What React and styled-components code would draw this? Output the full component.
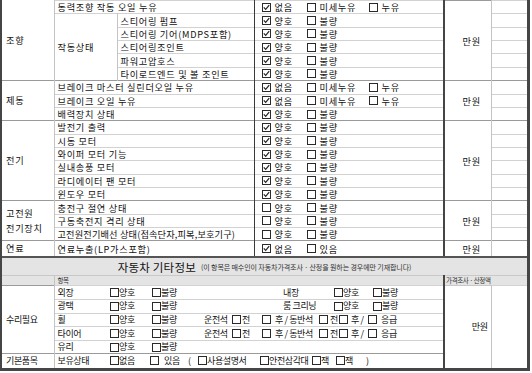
import React from 'react'
import styled, { createGlobalStyle } from 'styled-components'

const Global = createGlobalStyle`
  html, body { margin: 0; padding: 0; background: #fff; }
  body { font-family: "Noto Sans CJK KR", "Noto Sans", sans-serif; color: #111; }
`

const Frame = styled.div`
  width: 525px;
  border-left: 2px solid #454545;
  border-right: 3px solid #454545;
  border-bottom: 3px solid #454545;
`

const Table = styled.table`
  width: 525px;
  table-layout: fixed;
  border-collapse: collapse;
  font-size: 9.2px;
  letter-spacing: 0.7px;
  word-spacing: 0;
  td { padding: 0; line-height: 12px; white-space: nowrap; overflow: hidden; }
`

const Row = styled.tr`
  height: 13.37px;
  td { border-top: 1px solid ${p => (p.group ? '#9a9a9a' : '#d2d2d2')}; }
`

const Cat = styled.td`
  padding-left: 4px !important;
  border-right: 1px solid #c4c4c4;
  border-top: 1px solid ${p => (p.first ? 'transparent' : '#9a9a9a')} !important;
  vertical-align: middle;
  line-height: 15px !important;
`

const Item = styled.td`
  padding-left: 3px !important;
  border-right: ${p => (p.inner ? '1px solid #c4c4c4' : '1px solid #3a3a3a')};
  letter-spacing: ${p => (p.tight ? '0.15px' : 'inherit')};
`

const Result = styled.td`
  padding-left: 7px !important;
  border-right: 2px solid #454545;
`

const Price = styled.td`
  text-align: center;
  vertical-align: middle;
  padding-left: 8px !important;
  border-right: 1px solid #c4c4c4;
  border-top: 1px solid #9a9a9a !important;
`

const Blank = styled.td``

const Options = styled.div`
  display: flex;
  align-items: center;
`

const Opt = styled.span`
  display: inline-flex;
  align-items: center;
  flex: none;
  gap: ${p => p.gap ?? 5}px;
  width: ${p => (p.w ? `${p.w}px` : 'auto')};
  margin-left: ${p => p.ml || 0}px;
`

const Word = styled.span`
  flex: none;
  width: ${p => (p.w ? `${p.w}px` : 'auto')};
`

const Box = ({ on, size = 9 }) => (
  <svg width={size} height={size} viewBox="0 0 9 9" style={{ flex: 'none' }}>
    <rect x="0.5" y="0.5" width="8" height="8" fill="#fff" stroke="#2a2a2a" />
    {on && <path d="M1.8 4.4 L3.7 6.4 L7.2 2.2" fill="none" stroke="#222" strokeWidth="1.2" />}
  </svg>
)

const Check = ({ on, label, w, gap, ml, size }) => (
  <Opt w={w} gap={gap} ml={ml}>
    <Box on={on} size={size} />
    {label}
  </Opt>
)

const Good = ({ on = true }) => (
  <Options>
    <Check on={on} label="양호" w={45} gap={4} />
    <Check label="불량" gap={4} />
  </Options>
)

const Leak = () => (
  <Options>
    <Check on label="없음" w={45} gap={4} />
    <Check label="미세누유" w={62} gap={4} />
    <Check label="누유" gap={4} />
  </Options>
)

const Band = styled.div`
  background: #e4e4e4;
  border-top: 2px solid #555;
  height: 17px;
  display: flex;
  align-items: center;
  justify-content: center;
  gap: 5px;
`

const BandTitle = styled.span`
  font-size: 11.5px;
  letter-spacing: 0.2px;
`

const BandNote = styled.span`
  font-size: 7px;
  letter-spacing: -0.1px;
  color: #333;
`

const Lower = styled(Table)`
  font-size: 9px;
  letter-spacing: -0.4px;
  word-spacing: 0;
`

const HeadRow = styled.tr`
  height: 10px;
  background: #e4e4e4;
  td { border-top: 1px solid #c8c8c8; font-size: 6.5px; line-height: 9px; color: #333; }
`

const LRow = styled.tr`
  height: 13.6px;
  td { border-top: 1px solid ${p => (p.group ? '#9a9a9a' : '#d2d2d2')}; }
`

const LCat = styled.td`
  padding-left: 4px !important;
  border-right: 1px solid #c4c4c4;
  border-top: 1px solid #9a9a9a !important;
  vertical-align: middle;
`

const LItem = styled.td`
  padding-left: 3px !important;
`

const LVal = styled.td`
  padding-left: ${p => p.pl ?? 3}px !important;
`

const LPrice = styled.td`
  border-left: 2px solid #454545;
  border-right: 1px solid #c4c4c4;
  text-align: right;
  padding-right: 3px !important;
  vertical-align: middle;
  border-top: 1px solid #c8c8c8 !important;
`

const Tiny = styled.td`
  padding-left: ${p => p.pl || 3}px !important;
  border-left: ${p => (p.edge ? '2px solid #454545' : 'none')};
  border-right: ${p => (p.split ? '1px solid #c4c4c4' : 'none')};
`

const Pair = ({ w = 42 }) => (
  <Options>
    <Check label="양호" w={w} gap={0} />
    <Check label="불량" gap={0} />
  </Options>
)

const Seat = () => (
  <Options>
    <Word w={28}>운전석</Word>
    <Check label="전" w={30} gap={1} />
    <Check label="후 / 동반석" w={57} gap={4} />
    <Check label="전" w={20} gap={2} />
    <Check label="후 /" w={29} gap={3} />
    <Check label="응급" gap={4} />
  </Options>
)

const steering = ['스티어링 펌프', '스티어링 기어(MDPS포함)', '스티어링조인트', '파워고압호스', '타이로드엔드 및 볼 조인트']
const electric = ['발전기 출력', '시동 모터', '와이퍼 모터 기능', '실내송풍 모터', '라디에이터 팬 모터', '윈도우 모터']
const hv = ['충전구 절연 상태', '구동축전지 격리 상태', '고전원전기배선 상태(접속단자,피복,보호기구)']

const Cols = () => (
  <colgroup>
    <col style={{ width: 52 }} />
    <col style={{ width: 63 }} />
    <col style={{ width: 137 }} />
    <col style={{ width: 190 }} />
    <col style={{ width: 47 }} />
    <col style={{ width: 36 }} />
  </colgroup>
)

const App = () => (
  <>
    <Global />
    <Frame>
      <Table>
        <Cols />
        <tbody>
          <Row>
            <Cat first rowSpan={6}>조향</Cat>
            <Item colSpan={2}>동력조향 작동 오일 누유</Item>
            <Result><Leak /></Result>
            <Price rowSpan={6}>만원</Price>
            <Blank />
          </Row>
          {steering.map((s, i) => (
            <Row key={s}>
              {i === 0 && <Item inner rowSpan={5}>작동상태</Item>}
              <Item>{s}</Item>
              <Result><Good /></Result>
              <Blank />
            </Row>
          ))}
          <Row group>
            <Cat rowSpan={3}>제동</Cat>
            <Item colSpan={2}>브레이크 마스터 실린더오일 누유</Item>
            <Result><Leak /></Result>
            <Price rowSpan={3}>만원</Price>
            <Blank />
          </Row>
          <Row>
            <Item colSpan={2}>브레이크 오일 누유</Item>
            <Result><Leak /></Result>
            <Blank />
          </Row>
          <Row>
            <Item colSpan={2}>배력장치 상태</Item>
            <Result><Good /></Result>
            <Blank />
          </Row>
          {electric.map((s, i) => (
            <Row key={s} group={i === 0}>
              {i === 0 && <Cat rowSpan={6}>전기</Cat>}
              <Item colSpan={2}>{s}</Item>
              <Result><Good /></Result>
              {i === 0 && <Price rowSpan={6}>만원</Price>}
              <Blank />
            </Row>
          ))}
          {hv.map((s, i) => (
            <Row key={s} group={i === 0}>
              {i === 0 && <Cat rowSpan={3}>고전원<br />전기장치</Cat>}
              <Item colSpan={2} tight={i === 2}>{s}</Item>
              <Result><Good on={false} /></Result>
              {i === 0 && <Price rowSpan={3}>만원</Price>}
              <Blank />
            </Row>
          ))}
          <Row group>
            <Cat>연료</Cat>
            <Item colSpan={2}>연료누출(LP가스포함)</Item>
            <Result>
              <Options>
                <Check on label="없음" w={45} gap={4} />
                <Check label="있음" gap={4} />
              </Options>
            </Result>
            <Price>만원</Price>
            <Blank />
          </Row>
        </tbody>
      </Table>
      <Band>
        <BandTitle>자동차 기타정보</BandTitle>
        <BandNote>(이 항목은 매수인이 자동차가격조사 · 산정을 원하는 경우에만 기재합니다)</BandNote>
      </Band>
      <Lower>
        <colgroup>
          <col style={{ width: 52 }} />
          <col style={{ width: 53 }} />
          <col style={{ width: 97 }} />
          <col style={{ width: 76 }} />
          <col style={{ width: 51 }} />
          <col style={{ width: 113 }} />
          <col style={{ width: 47 }} />
          <col style={{ width: 36 }} />
        </colgroup>
        <tbody>
          <HeadRow>
            <Tiny split />
            <Tiny colSpan={5}>항목</Tiny>
            <Tiny colSpan={2} edge pl={1}>가격조사 · 산정액</Tiny>
          </HeadRow>
          <LRow>
            <LCat rowSpan={5}>수리필요</LCat>
            <LItem>외장</LItem>
            <LVal><Pair /></LVal>
            <LVal />
            <LVal>내장</LVal>
            <LVal><Pair w={39} /></LVal>
            <LPrice rowSpan={6}>만원</LPrice>
            <Blank rowSpan={6} />
          </LRow>
          <LRow>
            <LItem>광택</LItem>
            <LVal><Pair /></LVal>
            <LVal />
            <LVal>룸 크리닝</LVal>
            <LVal><Pair w={39} /></LVal>
          </LRow>
          <LRow>
            <LItem>휠</LItem>
            <LVal><Pair /></LVal>
            <LVal colSpan={3} pl={0}><Seat /></LVal>
          </LRow>
          <LRow>
            <LItem>타이어</LItem>
            <LVal><Pair /></LVal>
            <LVal colSpan={3} pl={0}><Seat /></LVal>
          </LRow>
          <LRow>
            <LItem>유리</LItem>
            <LVal><Pair /></LVal>
            <LVal colSpan={3} />
          </LRow>
          <LRow group>
            <LCat>기본품목</LCat>
            <LItem>보유상태</LItem>
            <LVal colSpan={4}>
              <Options>
                <Check label="없음" w={40} gap={0} />
                <Check label="있음" w={38} gap={5} />
                <Word w={10}>(</Word>
                <Check label="사용설명서" w={62} gap={0} />
                <Check label="안전삼각대" w={52} gap={0} />
                <Check label="잭" w={24} gap={0} />
                <Check label="잭" w={30} gap={0} />
                <Word>)</Word>
              </Options>
            </LVal>
          </LRow>
        </tbody>
      </Lower>
    </Frame>
  </>
)

export default App
